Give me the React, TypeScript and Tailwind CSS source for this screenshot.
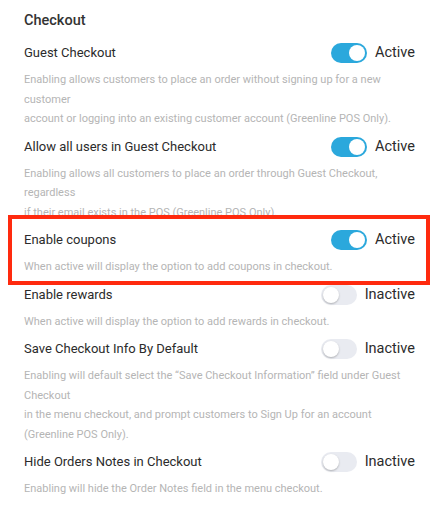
import React from "react";

type Row = { title: string; desc: string[]; active: boolean; highlight?: boolean };

const rows: Row[] = [
  {
    title: "Guest Checkout",
    desc: [
      "Enabling allows customers to place an order without signing up for a new customer",
      "account or logging into an existing customer account (Greenline POS Only).",
    ],
    active: true,
  },
  {
    title: "Allow all users in Guest Checkout",
    desc: [
      "Enabling allows all customers to place an order through Guest Checkout, regardless",
      "if their email exists in the POS (Greenline POS Only).",
    ],
    active: true,
  },
  {
    title: "Enable coupons",
    desc: ["When active will display the option to add coupons in checkout."],
    active: true,
    highlight: true,
  },
  {
    title: "Enable rewards",
    desc: ["When active will display the option to add rewards in checkout."],
    active: false,
  },
  {
    title: "Save Checkout Info By Default",
    desc: [
      "Enabling will default select the \u201cSave Checkout Information\u201d field under Guest Checkout",
      "in the menu checkout, and prompt customers to Sign Up for an account (Greenline POS Only).",
    ],
    active: false,
  },
  {
    title: "Hide Orders Notes in Checkout",
    desc: ["Enabling will hide the Order Notes field in the menu checkout."],
    active: false,
  },
];

function Toggle({ on }: { on: boolean }) {
  return (
    <div className="flex items-center gap-2">
      {on ? (
        <div className="flex h-5 w-9 items-center justify-end rounded-full bg-[#2ba8dc] px-[2px]">
          <div className="h-4 w-4 rounded-full bg-white" />
        </div>
      ) : (
        <div className="flex h-5 w-9 items-center justify-start rounded-full bg-[#e9ebf1] px-[2px]">
          <div className="h-4 w-4 rounded-full bg-white shadow-[0_1px_2px_rgba(0,0,0,0.25)]" />
        </div>
      )}
      <span className="text-[14.5px] leading-5 text-[#2b2b2b]">{on ? "Active" : "Inactive"}</span>
    </div>
  );
}

export default function App() {
  return (
    <div
      className="h-[514px] w-[434px] overflow-hidden bg-white pl-6 pr-[19px] pt-[10px]"
      style={{ fontFamily: "Roboto, 'Liberation Sans', sans-serif" }}
    >
      <div className="text-[14.5px] font-medium leading-[22px] text-[#333]">Checkout</div>
      <div className="mt-[11px] flex flex-col">
        {rows.map((r) => (
          <div key={r.title} className="relative pb-[8px]">
            {r.highlight && (
              <div className="pointer-events-none absolute -left-4 -right-[15px] -top-[15px] bottom-0 border-[4px] border-[#ff2a0e]" />
            )}
            <div className="flex h-5 items-center justify-between">
              <span className="text-[13px] text-[#2b2b2b]">{r.title}</span>
              <Toggle on={r.active} />
            </div>
            <div className="mt-[7px] pr-1 text-[11px] leading-[19.5px] text-[#b5b5b5]">
              {r.desc.map((d, i) => (
                <div key={i}>{d}</div>
              ))}
            </div>
          </div>
        ))}
      </div>
    </div>
  );
}
